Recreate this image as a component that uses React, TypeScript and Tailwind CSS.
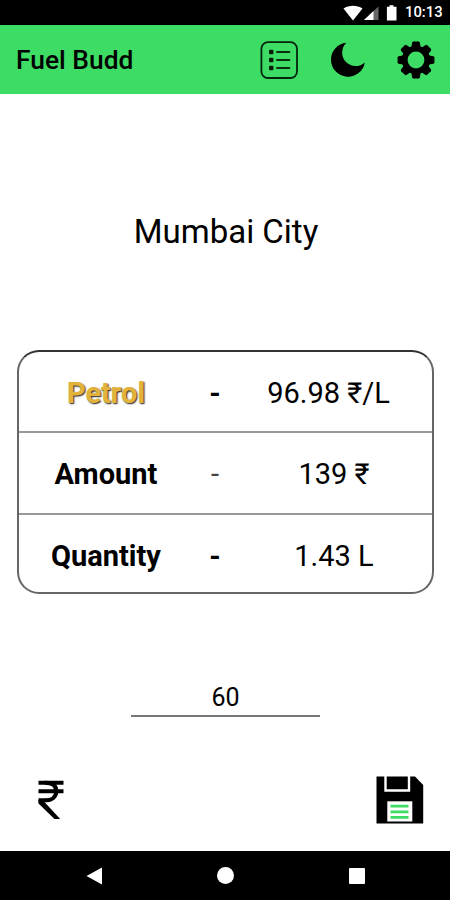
const rows = [
  { label: 'Petrol', value: '96.98 ₹/L', highlight: true, boldDash: true },
  { label: 'Amount', value: '139 ₹', highlight: false, boldDash: false },
  { label: 'Quantity', value: '1.43 L', highlight: false, boldDash: true },
]

const gearTeeth = [0, 45, 90, 135, 180, 225, 270, 315]

function StatusBar() {
  return (
    <div className="flex h-[25px] shrink-0 items-center justify-end bg-black pr-[7px] text-white">
      <svg width="62" height="25" viewBox="0 0 62 25" fill="currentColor">
        <path d="M3.5 8.6C9 4.8 17 4.8 22.5 8.6L13 20.5z" />
        <path d="M38.5 6.5V20H24z" opacity="0.4" />
        <path d="M33.5 11V20H24z" />
        <path d="M49.5 5.2h4v1.6h3V20.5h-9.6V6.8h2.6z" />
      </svg>
      <span className="ml-[3px] w-[38px] text-[14.8px] leading-[27px] font-medium whitespace-nowrap">10:13</span>
    </div>
  )
}

function ListIcon() {
  return (
    <svg width="38" height="38" viewBox="0 0 38 38">
      <rect x="1.4" y="1.2" width="35.6" height="35.8" rx="6.5" fill="none" stroke="#05250d" strokeWidth="1.8" />
      <g fill="#031c09">
        <rect x="9" y="8.8" width="4.4" height="4.4" rx="1" />
        <rect x="9" y="16.8" width="4.4" height="4.4" rx="1" />
        <rect x="9" y="24.8" width="4.4" height="4.4" rx="1" />
      </g>
      <g stroke="#06300f" strokeWidth="1.8" strokeLinecap="round">
        <path d="M17 11h12.5M17 19h12.5M17 27h12.5" />
      </g>
    </svg>
  )
}

function MoonIcon() {
  return (
    <svg width="36" height="38" viewBox="0 0 36 38">
      <path d="M16.4 1.8A17 17 0 1 0 34.8 21.4A13.2 13.2 0 0 1 16.4 1.8z" fill="#000" />
    </svg>
  )
}

function GearIcon() {
  return (
    <svg width="38" height="38" viewBox="-19 -19 38 38">
      <circle r="11.3" fill="none" stroke="#000" strokeWidth="5.8" />
      {gearTeeth.map((angle) => (
        <path
          key={angle}
          d="M-4.6 -13L-3.8 -17.4Q-3.5 -18.4 -2.6 -18.4H2.6Q3.5 -18.4 3.8 -17.4L4.6 -13z"
          transform={`rotate(${angle})`}
        />
      ))}
    </svg>
  )
}

function RupeeIcon() {
  return (
    <svg width="52" height="52" viewBox="0 0 52 52" fill="none" stroke="#000" strokeWidth="4">
      <path d="M13.5 8.8H38.5M13.5 17.2H38.5" />
      <path d="M20 8.8C28 8.8 31.3 12 31.3 17.2C31.3 22.8 27 26.3 20 26.3H13.5" />
      <path d="M13.5 26V29.4L29.5 45H35.2L19 27.4z" fill="#000" stroke="none" />
    </svg>
  )
}

function SaveIcon() {
  return (
    <svg width="48" height="48" viewBox="0 0 48 48">
      <path d="M0.5 0.5H39L47.2 9V47.5H0.5z" fill="#000" />
      <path d="M9.5 0V14.5H33V0" fill="none" stroke="#fff" strokeWidth="2.4" />
      <rect x="11.3" y="25.3" width="25" height="20.2" fill="#fff" />
      <path d="M14.5 30.2h18M14.5 35.8h18M14.5 41.4h18" stroke="#3ddc64" strokeWidth="2.8" />
    </svg>
  )
}

export default function App() {
  return (
    <div className="flex h-[900px] w-[450px] flex-col overflow-hidden bg-white font-['Roboto','Noto_Sans',sans-serif] text-black">
      <StatusBar />

      <header className="flex h-[69px] shrink-0 items-center bg-[#3ddc64] pl-[16px] pr-[15px]">
        <h1 className="pt-[3px] text-[26.4px] font-medium">Fuel Budd</h1>
        <div className="ml-auto flex items-center">
          <ListIcon />
          <div className="ml-[32px]">
            <MoonIcon />
          </div>
          <div className="ml-[31px]">
            <GearIcon />
          </div>
        </div>
      </header>

      <main className="flex flex-1 flex-col">
        <h2 className="mt-[116px] pl-[2px] text-center text-[33px] leading-[44px]">Mumbai City</h2>

        <div className="mt-[96px] mr-[16px] ml-[17px] grid h-[244px] grid-rows-[81px_82px_77px] overflow-hidden rounded-[22px] border-2 border-[#666] border-t-[#333] divide-y-2 divide-[#999]">
          {rows.map((row) => (
            <div key={row.label} className="grid grid-cols-[174px_44px_194px] content-start items-center pt-[20px] text-[29px]">
              <span
                className={
                  row.highlight
                    ? 'text-center font-bold text-[#e3b23a] [text-shadow:1px_1px_1.5px_#222]'
                    : 'text-center font-bold'
                }
              >
                {row.label}
              </span>
              <span className={row.boldDash ? 'text-center font-bold' : 'text-center text-[#444]'}>-</span>
              <span className={row.highlight ? 'pr-[11px] text-center' : 'text-center'}>{row.value}</span>
            </div>
          ))}
        </div>

        <div className="mt-[84px] ml-[131px] flex h-[39px] w-[189px] items-center justify-center border-b-2 border-[#777] pt-[2px] text-[25px]">
          60
        </div>

        <div className="mt-[57px] flex items-start justify-between pr-[26px] pl-[25px]">
          <RupeeIcon />
          <div className="mt-[2px]">
            <SaveIcon />
          </div>
        </div>
      </main>

      <nav className="flex h-[49px] shrink-0 items-center bg-black text-white">
        <svg className="ml-[86px]" width="17" height="18" viewBox="0 0 17 18" fill="currentColor">
          <path d="M0.5 9L16 0.5V17.5z" />
        </svg>
        <div className="ml-[114px] size-[17px] rounded-full bg-white"></div>
        <div className="ml-[115px] size-[16px] rounded-[1px] bg-white"></div>
      </nav>
    </div>
  )
}
